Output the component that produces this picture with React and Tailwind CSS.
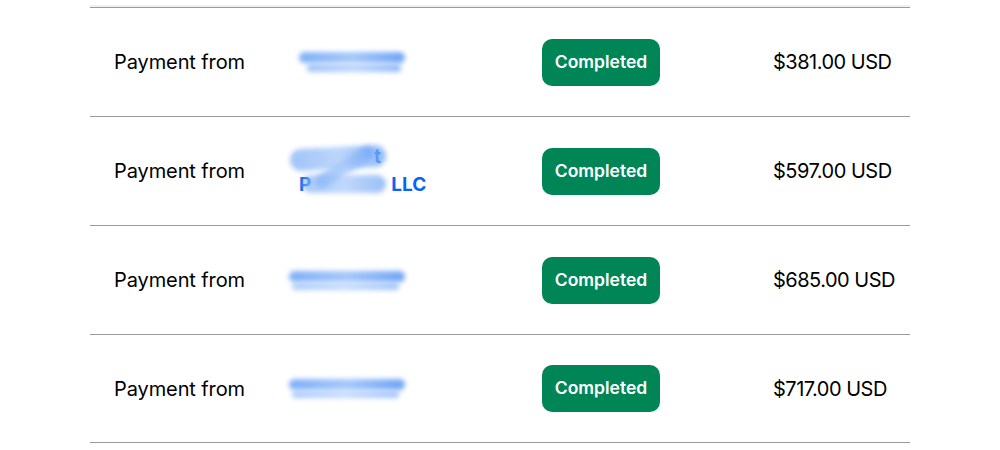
import React from "react";

const rows = [
  { amount: "$381.00 USD", name: "short" },
  { amount: "$597.00 USD", name: "llc" },
  { amount: "$685.00 USD", name: "long" },
  { amount: "$717.00 USD", name: "long2" },
];

const Smudge = ({ className }) => (
  <div
    className={`rounded-full bg-gradient-to-r from-[#7fb0f7] via-[#a6c8fa] to-[#6fa4f5] blur-[2.5px] ${className}`}
  />
);

const PayerName = ({ type }) => {
  if (type === "llc") {
    return (
      <div className="relative -ml-[9px] font-bold text-[19px] leading-[28px] text-[#0a64f2]">
        <div className="flex pl-[9px]">
          <span className="w-[75px]"></span>
          <span>t</span>
        </div>
        <div className="flex pl-[9px]">
          <span>P</span>
          <span className="w-[80px]"></span>
          <span>LLC</span>
        </div>
        <div className="absolute left-0 top-[4px] w-[96px] h-[22px] -rotate-3">
          <Smudge className="w-full h-full opacity-75" />
        </div>
        <div className="absolute left-[26px] top-[16px] w-[66px] h-[30px] rotate-[-32deg]">
          <Smudge className="w-full h-[14px] opacity-80" />
        </div>
        <div className="absolute left-[12px] top-[32px] w-[84px] h-[18px]">
          <Smudge className="w-full h-full opacity-70" />
        </div>
      </div>
    );
  }
  if (type === "short") {
    return (
      <div className="flex flex-col gap-[1px] w-[106px]">
        <Smudge className="h-[11px] w-full" />
        <Smudge className="h-[8px] w-[88%] ml-[8%] opacity-75" />
      </div>
    );
  }
  return (
    <div className="flex flex-col gap-[1px] w-[116px] -ml-[10px]">
      <Smudge className="h-[11px] w-full" />
      <Smudge className="h-[7px] w-[92%] ml-[3%] opacity-65" />
    </div>
  );
};

export default function App() {
  return (
    <div className="w-[1000px] h-[450px] bg-white font-['Inter',sans-serif] pt-[5px]">
      <div className="w-[820px] mx-auto border-t-2 border-[#f0f0f0]">
        {rows.map((row, i) => (
          <div
            key={i}
            className={`grid grid-cols-[185px_243px_231px_1fr] items-center h-[109px] pl-6 border-t border-[#9b9b9b] ${
              i === rows.length - 1 ? "border-b" : ""
            }`}
          >
            <div className="text-[20px] text-black tracking-[-0.1px] whitespace-nowrap">Payment from</div>
            <div>
              <PayerName type={row.name} />
            </div>
            <div>
              <span className="inline-flex items-center justify-center w-[118px] h-[47px] rounded-[10px] bg-[#008556] text-white text-[17.5px] font-semibold">
                Completed
              </span>
            </div>
            <div className="text-[20px] text-black tracking-[-0.5px] whitespace-nowrap">{row.amount}</div>
          </div>
        ))}
      </div>
    </div>
  );
}
